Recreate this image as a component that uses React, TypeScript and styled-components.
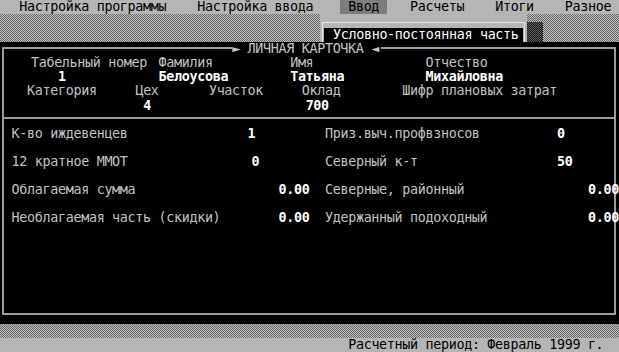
import styled, { createGlobalStyle } from "styled-components";

// text-mode screen: 80 x 25 cells squeezed into 619 x 352
const ROW = 352 / 25;

type Item = [number, string, "label" | "value"];

const GlobalStyle = createGlobalStyle`
  html, body { margin:0; padding:0; background:#000; }
  body { width:619px; height:352px; overflow:hidden; }
`;

const Screen = styled.div`
  width:619px;
  height:352px;
  display:flex;
  flex-direction:column;
  overflow:hidden;
  background:#000;
  font-family:"DejaVu Sans Mono","Liberation Mono",monospace;
  font-size:13.4px;
  letter-spacing:-0.33px;
  line-height:${ROW}px;
`;

const Line = styled.div`
  display:grid;
  grid-template-columns:repeat(160, minmax(0, 1fr));
  height:${ROW}px;
  flex:none;
  white-space:pre;
`;

const Cell = styled.span<{ $col: number; $len: number }>`
  grid-row:1;
  grid-column:${(p) => Math.round(p.$col * 2) + 1} / ${(p) =>
      Math.min(Math.round(p.$col * 2) + 1 + p.$len * 2, 161)};
  min-width:0;
`;

const Label = styled(Cell)`
  color:#c2c2c2;
`;

const Value = styled(Cell)`
  color:#fff;
  font-weight:bold;
`;

const MenuBar = styled(Line)`
  background:#b5b5b5;
`;

const MenuItem = styled(Cell)<{ $active?: boolean }>`
  color:#000;
  background:${(p) => (p.$active ? "#7d7d7d" : "transparent")};
`;

const Desktop = styled.div<{ $rows: number }>`
  position:relative;
  flex:none;
  height:${(p) => p.$rows * ROW}px;
  background:repeating-conic-gradient(#c0c0c0 0 25%, #646464 0 50%) 0 0 / 2px 2px;
`;

const Popup = styled.div`
  position:absolute;
  left:320px;
  top:0;
  width:207px;
  height:${2 * ROW}px;
  box-sizing:border-box;
  padding:8px 2px 0 2px;
  background:#b5b5b5;
`;

const PopupFrame = styled.div`
  border:1px solid #e4e4e4;
  border-bottom:none;
  padding:5px 1px 0 1px;
`;

const PopupItem = styled.div`
  height:${ROW}px;
  padding-left:9px;
  background:#000;
  color:#fff;
  white-space:pre;
`;

const Shadow = styled.div`
  position:absolute;
  left:527px;
  top:8px;
  width:16px;
  bottom:0;
  background:repeating-conic-gradient(#5a5a5a 0 25%, #1a1a1a 0 50%) 0 0 / 2px 2px;
`;

const Window = styled.div`
  flex:none;
  height:${20 * ROW}px;
  background:#000;
`;

const Frame = styled.div`
  position:relative;
  margin:4.8px 3px 8.34px 2px;
  border:2px solid #9c9c9c;
  padding:7.28px 0 3.74px 0;
`;

const FrameLine = styled(Line)`
  margin:0 -5px 0 -4px;
`;

const Title = styled.div`
  position:absolute;
  left:${30 * (619 / 80) - 4}px;
  top:-6.8px;
  height:${ROW}px;
  padding-right:2px;
  background:#000;
  color:#c4c4c4;
  white-space:pre;
`;

const Divider = styled.div`
  height:2px;
  margin:4.5px 0 7.58px 0;
  background:#9c9c9c;
`;

const StatusBar = styled(Line)`
  background:#b5b5b5;
`;

const StatusText = styled(Cell)`
  color:#000;
`;

const menu: [number, string, boolean?][] = [
  [2.5, "Настройка программы"],
  [25.5, "Настройка ввода"],
  [44, " Ввод ", true],
  [53, "Расчеты"],
  [64, "Итоги"],
  [73, "Разное"],
];

const header: Item[][] = [
  [
    [4, "Табельный номер", "label"],
    [20.5, "Фамилия", "label"],
    [37.5, "Имя", "label"],
    [55, "Отчество", "label"],
  ],
  [
    [7.5, "1", "value"],
    [20.5, "Белоусова", "value"],
    [37.5, "Татьяна", "value"],
    [55, "Михайловна", "value"],
  ],
  [
    [3.5, "Категория", "label"],
    [17.5, "Цех", "label"],
    [27, "Участок", "label"],
    [39, "Оклад", "label"],
    [52, "Шифр плановых затрат", "label"],
  ],
  [
    [18.5, "4", "value"],
    [39.5, "700", "value"],
  ],
];

const details: Item[][] = [
  [
    [1.5, "К-во иждевенцев", "label"],
    [32, "1", "value"],
    [42, "Приз.выч.профвзносов", "label"],
    [72, "0", "value"],
  ],
  [],
  [
    [1.5, "12 кратное ММОТ", "label"],
    [32.5, "0", "value"],
    [42, "Северный к-т", "label"],
    [72, "50", "value"],
  ],
  [],
  [
    [1.5, "Облагаемая сумма", "label"],
    [36, "0.00", "value"],
    [42, "Северные, районный", "label"],
    [76, "0.00", "value"],
  ],
  [],
  [
    [1.5, "Необлагаемая часть (скидки)", "label"],
    [36, "0.00", "value"],
    [42, "Удержанный подоходный", "label"],
    [76, "0.00", "value"],
  ],
  [],
  [],
  [],
  [],
  [],
  [],
];

const renderRow = (row: Item[], i: number) => (
  <FrameLine key={i}>
    {row.map(([col, text, kind]) =>
      kind === "label" ? (
        <Label key={col} $col={col} $len={text.length}>
          {text}
        </Label>
      ) : (
        <Value key={col} $col={col} $len={text.length}>
          {text}
        </Value>
      )
    )}
  </FrameLine>
);

const App = () => {
  const status = "Расчетный период: Февраль 1999 г.";
  return (
    <>
      <GlobalStyle />
      <Screen>
        <MenuBar>
          {menu.map(([col, text, active]) => (
            <MenuItem key={text} $col={col} $len={text.length} $active={active}>
              {text}
            </MenuItem>
          ))}
        </MenuBar>

        <Desktop $rows={2}>
          <Popup>
            <PopupFrame>
              <PopupItem>Условно-постоянная часть</PopupItem>
            </PopupFrame>
          </Popup>
          <Shadow />
        </Desktop>

        <Window>
          <Frame>
            <Title>► ЛИЧНАЯ КАРТОЧКА ◄</Title>
            {header.map(renderRow)}
            <Divider />
            {details.map(renderRow)}
          </Frame>
        </Window>

        <Desktop $rows={1} />

        <StatusBar>
          <StatusText $col={45} $len={status.length}>
            {status}
          </StatusText>
        </StatusBar>
      </Screen>
    </>
  );
};

export default App;
